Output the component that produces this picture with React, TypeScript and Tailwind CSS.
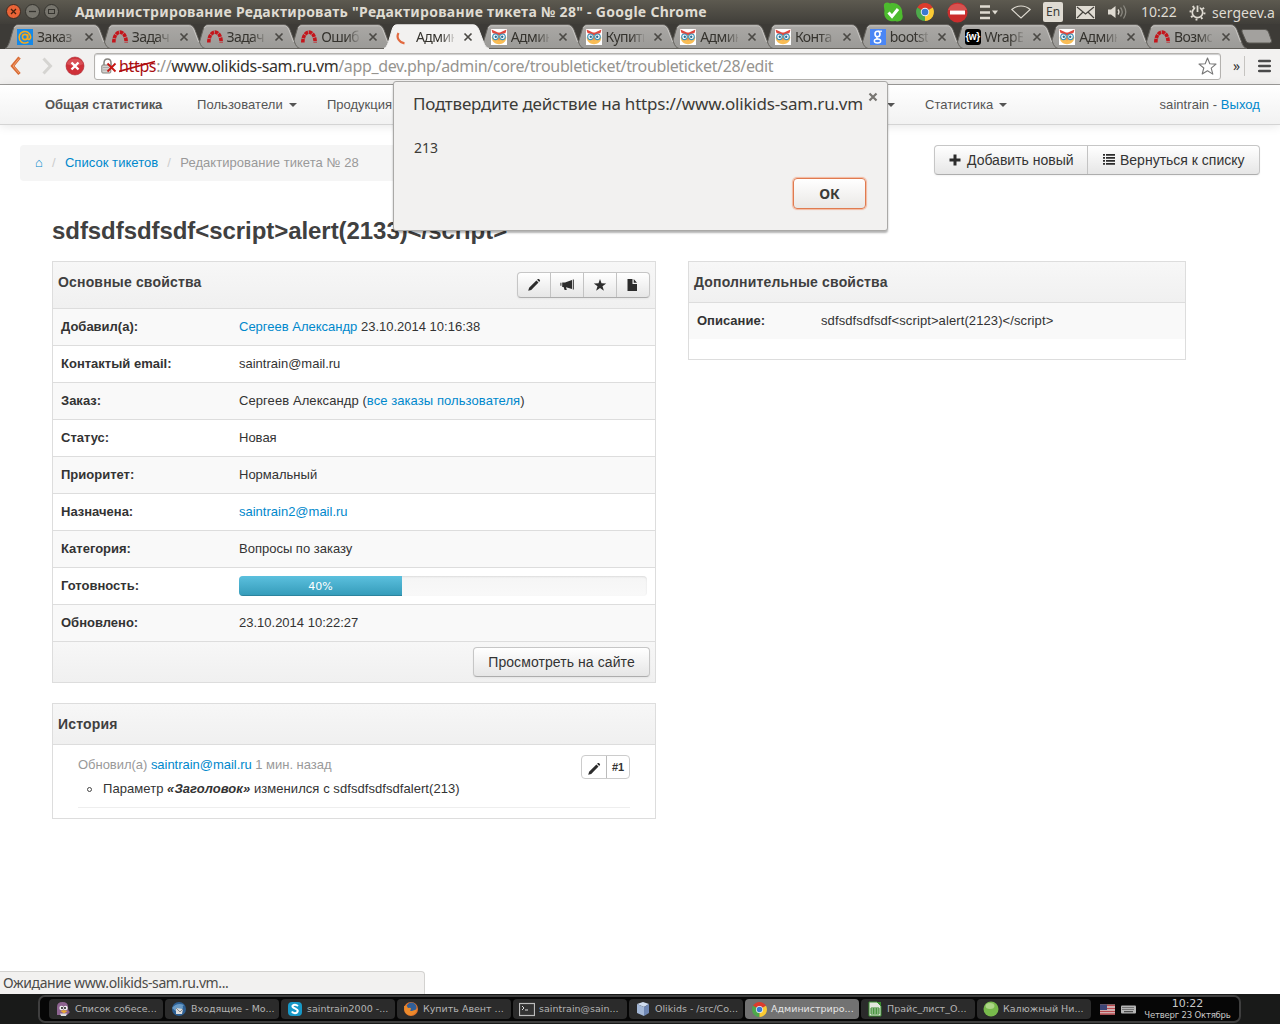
import React from 'react';

type Kids = { children?: React.ReactNode };

/* ---------- Tab icons ---------- */

const MailAt = () => (
  <svg width="16" height="16" viewBox="0 0 16 16">
    <rect width="16" height="16" fill="#1589e8" />
    <g fill="none" stroke="#f6a81c" strokeWidth="1.6">
      <circle cx="8" cy="8" r="2.6" />
      <path d="M10.7 5.2v4c0 2 3 1.600 3-1.200A5.800 5.800 0 1 0 11.500 12.800" />
    </g>
  </svg>
);

const Redmine = () => (
  <svg width="16" height="16" viewBox="0 0 16 16">
    <path d="M1.800 13.500C2 -0.300 14 -0.300 14.200 13.500" fill="none" stroke="#c4161c" strokeWidth="3.600" strokeDasharray="3.600 0.700" />
  </svg>
);

const Owl = () => (
  <svg width="16" height="16" viewBox="0 0 16 16">
    <rect width="16" height="16" fill="#fff" />
    <path d="M.8 8c-.5 9.500 14.900 9.500 14.400 0L8 6z" fill="#f9bd55" />
    <path d="M.5.5 7 3.500h2L15.500.5 14.500 4 8 6.200 1.500 4z" fill="#e2483d" />
    <circle cx="4.500" cy="7.800" r="2.800" fill="#fff" stroke="#3c91b8" strokeWidth="1.100" />
    <circle cx="11.500" cy="7.800" r="2.800" fill="#fff" stroke="#3c91b8" strokeWidth="1.100" />
    <circle cx="4.800" cy="7.800" r="1.200" fill="#2b6c93" />
    <circle cx="11.200" cy="7.800" r="1.200" fill="#2b6c93" />
    <path d="M7.200 9.500h1.600L8 12z" fill="#e2683d" />
  </svg>
);

const GoogleIcon = () => (
  <svg width="16" height="16" viewBox="0 0 16 16">
    <rect width="16" height="16" fill="#4a86f5" />
    <g fill="none" stroke="#fff">
      <ellipse cx="7.500" cy="5" rx="2.500" ry="2.800" strokeWidth="1.600" />
      <path d="M8 2.200h4" strokeWidth="1.200" />
      <path d="M7.500 8Q5.500 9 8 10" strokeWidth="1.300" />
      <ellipse cx="7.500" cy="12" rx="3.200" ry="2" strokeWidth="1.400" />
    </g>
  </svg>
);

const WrapIcon = () => (
  <span className="flex h-4 w-4 items-center justify-center rounded-[3px] bg-black font-['Liberation_Sans',sans-serif] text-[10px] leading-none font-bold tracking-[-0.5px] text-white">
    {'{w}'}
  </span>
);

const Spinner = () => (
  <svg width="16" height="16" viewBox="0 0 16 16">
    <path d="M2.500 4C0 8.500 3 13.500 8.500 14.300" fill="none" stroke="#e2693f" strokeWidth="2.200" />
  </svg>
);

const tabs = [
  { icon: <MailAt />, text: 'Заказ' },
  { icon: <Redmine />, text: 'Задач' },
  { icon: <Redmine />, text: 'Задач' },
  { icon: <Redmine />, text: 'Ошиб' },
  { icon: <Spinner />, text: 'Админ', active: true },
  { icon: <Owl />, text: 'Админ' },
  { icon: <Owl />, text: 'Купить' },
  { icon: <Owl />, text: 'Админ' },
  { icon: <Owl />, text: 'Конта' },
  { icon: <GoogleIcon />, text: 'bootst' },
  { icon: <WrapIcon />, text: 'WrapB' },
  { icon: <Owl />, text: 'Админ' },
  { icon: <Redmine />, text: 'Возмо' },
];

function Tab({ icon, text, active, z }: { icon: React.ReactNode; text: string; active?: boolean; z: number }) {
  return (
    <div className="relative h-[25px] w-[94.75px] shrink-0" style={{ zIndex: active ? 30 : z }}>
      <svg className="absolute top-0 left-0" width="106" height="25" viewBox="0 0 106 25">
        <defs>
          <linearGradient id="tabfill" x1="0" x2="0" y1="0" y2="1">
            <stop offset="0" stopColor="#aaa8a5" />
            <stop offset="1" stopColor="#9b9a97" />
          </linearGradient>
        </defs>
        <path
          d="M0 24.500C2 23.500 3 22 4.500 18L8 6C9 2.500 10 .8 13 .8H89C92 .8 93.500 2.500 95 6L99.500 18C101 22 102 23.500 105 24.500Z"
          fill={active ? '#f2f1f0' : 'url(#tabfill)'}
          stroke={active ? '#f2f1f0' : '#65635e'}
          strokeWidth="1"
        />
        {!active && <path d="M9.500 4C10.500 2 11 1.800 13 1.800H89C91 1.800 92.500 2.500 94 6L98.500 18" fill="none" stroke="#c8c6c3" strokeWidth="1" />}
      </svg>
      <div className="relative flex h-[25px] items-center pl-3">
        <span className="flex h-4 w-4 items-center">{icon}</span>
        <span className="ml-1 w-[38px] [mask-image:linear-gradient(to_right,#000_65%,rgba(0,0,0,0.15)_100%)] font-['Noto_Sans',sans-serif] text-[14px] leading-[20px] tracking-[-0.6px] whitespace-nowrap text-[#35332e]">
          {text}
        </span>
        <svg className="ml-[9px]" width="10" height="10" viewBox="0 0 10 10">
          <path d="m1.500 1.500 7 7m0-7-7 7" stroke="#4b4945" strokeWidth="1.700" />
        </svg>
      </div>
    </div>
  );
}

/* ---------- Window chrome ---------- */

const ChromeLogo = ({ size }: { size: number }) => (
  <svg width={size} height={size} viewBox="0 0 20 20">
    <path d="M10 10 1.400 5A10 10 0 0 1 18.600 5z" fill="#dd3b2c" />
    <path d="M10 10V20A10 10 0 0 1 1.400 5z" fill="#4da94b" />
    <path d="M10 10 18.600 5A10 10 0 0 1 10 20z" fill="#fbcb34" />
    <circle cx="10" cy="10" r="4.700" fill="#f3f3f3" />
    <circle cx="10" cy="10" r="3.700" fill="#3a79d0" />
  </svg>
);

function TitleBar() {
  return (
    <div className="flex h-6 items-center bg-linear-to-b from-[#5d5a50] to-[#403e39] pl-[6px] text-[#dfdbd2]">
      <svg width="54" height="16" viewBox="0 0 54 16">
        <circle cx="7.500" cy="7.500" r="7" fill="#ea6437" stroke="#3b2b23" />
        <path d="m5 5 5 5m0-5-5 5" stroke="#45200f" strokeWidth="1.300" />
        <circle cx="26.500" cy="7.500" r="7" fill="#77756d" stroke="#34332e" />
        <path d="M23 7.500h7" stroke="#35342f" strokeWidth="1.300" />
        <circle cx="45.500" cy="7.500" r="7" fill="#77756d" stroke="#34332e" />
        <rect x="42.500" y="5.500" width="6" height="4" fill="none" stroke="#35342f" />
      </svg>
      <span className="ml-[15px] w-[700px] font-['Noto_Sans',sans-serif] text-[14px] leading-6 font-bold tracking-[0.285px] whitespace-nowrap">
        Администрирование Редактировать "Редактирование тикета № 28" - Google Chrome
      </span>
      <div className="flex flex-1 items-center pl-[108px] font-['Noto_Sans',sans-serif] text-[14px]">
        <svg width="21" height="21" viewBox="0 0 21 21">
          <path d="M1 5C0 1 4-.5 7 1.500 14-.5 20 5 19.200 12c2 5-2 9-7 7C5 20.500 0 15 1.500 9z" fill="#4dbb2e" />
          <path d="m5.500 10.500 3.500 4 6-7.500" fill="none" stroke="#fff" strokeWidth="3" />
        </svg>
        <span className="ml-3"><ChromeLogo size={18} /></span>
        <svg className="ml-[13px]" width="21" height="21" viewBox="0 0 21 21">
          <circle cx="10.500" cy="10.500" r="10" fill="#cb2d2d" />
          <path d="M1 8A10 9 0 0 1 20 8Z" fill="#e06a68" opacity=".6" />
          <rect x="3" y="8.500" width="15" height="4" fill="#fff" />
        </svg>
        <svg className="ml-[12px]" width="20" height="15" viewBox="0 0 20 15">
          <path d="M0 1.500h10M0 7.500h10M0 13h10" stroke="#dfdbd2" strokeWidth="2.600" />
          <path d="M12 5.500h6l-3 4z" fill="#dfdbd2" />
        </svg>
        <svg className="ml-[11px]" width="20" height="14" viewBox="0 0 20 14">
          <path d="M.8 4.500C6-.2 14-.2 19.200 4.500L10 13z" fill="none" stroke="#dfdbd2" strokeWidth="1.100" />
        </svg>
        <span className="ml-3 flex h-5 w-5 items-center justify-center rounded-[2px] bg-[#dfdbd2] text-[12px] text-[#3c3b37]">En</span>
        <svg className="ml-[13px]" width="19" height="13" viewBox="0 0 19 13">
          <rect width="19" height="13" fill="#dfdbd2" />
          <path d="m1 1 8.500 7L18 1M1 12l6-6m11 6-6-6" fill="none" stroke="#45433d" strokeWidth="1.200" />
        </svg>
        <svg className="ml-3" width="21" height="16" viewBox="0 0 21 16">
          <path d="M1 5.500h3L8.500 2v12L4 10.500H1z" fill="#dfdbd2" />
          <path d="M11 5.500q2 2.500 0 5" fill="none" stroke="#dfdbd2" strokeWidth="1.300" />
          <path d="M13.500 3.500q3.500 4.500 0 9M16.500 1.500q4.500 6.500 0 13" fill="none" stroke="#8b8981" strokeWidth="1.300" />
        </svg>
        <span className="ml-[13px] w-9 leading-5 whitespace-nowrap">10:22</span>
        <svg className="ml-3" width="17" height="17" viewBox="0 0 17 17">
          <circle cx="8.500" cy="8.500" r="7" fill="none" stroke="#dfdbd2" strokeWidth="2" strokeDasharray="1.900 3.598" />
          <circle cx="8.500" cy="8.500" r="5.200" fill="none" stroke="#dfdbd2" strokeWidth="1.700" />
          <path d="M8.500 0v8" stroke="#4b4942" strokeWidth="4.400" />
          <path d="M8.500 1.500v6.500" stroke="#dfdbd2" strokeWidth="1.800" />
        </svg>
        <span className="ml-[6px] tracking-[0.05px]">sergeev.a</span>
      </div>
    </div>
  );
}

function TabStrip() {
  return (
    <div className="relative z-0 flex h-[25px] bg-[#3d3b37] pl-[5px]">
      {tabs.map((t, i) => (
        <Tab key={i} {...t} z={20 - i} />
      ))}
      <svg className="mt-[5px] ml-[4px] shrink-0" width="32" height="15" viewBox="0 0 32 15">
        <path d="M2 .5h22q2.500 0 3.500 2.500l3 8.500q.5 2.500-2 2.500H8q-2.500 0-3.300-2.500L1 3Q.3.500 2 .5z" fill="#a3a19e" stroke="#5a5853" />
      </svg>
    </div>
  );
}

function Toolbar() {
  return (
    <div className="flex h-9 items-center border-b border-[#9d9c9a] bg-[#f2f1f0] pb-px pl-[10px]">
      <svg width="80" height="20" viewBox="0 0 80 20">
        <path d="m9.500 1.500-7 8.500 7 8" fill="none" stroke="#d86b35" strokeWidth="3.200" />
        <path d="m9 2.500-6 7.500 6 7" fill="none" stroke="#f3a06d" strokeWidth="1" />
        <path d="m33.500 2.500 7 7.500-7 7.500" fill="none" stroke="#d5d4d1" strokeWidth="3" />
        <circle cx="65" cy="10" r="9" fill="#cf3038" stroke="#a92830" strokeWidth=".6" />
        <path d="M56.500 8a9 8 0 0 1 17 0Q65 12 56.500 8z" fill="#e0666b" opacity=".6" />
        <path d="m61.500 6.500 7 7m0-7-7 7" stroke="#fff" strokeWidth="2.400" />
      </svg>
      <div className="ml-1 flex h-[27px] w-[1127px] items-center rounded-[3px] border border-[#b4b2af] bg-white pl-[6px] shadow-[inset_0_1px_1px_#ccc]">
        <svg width="16" height="17" viewBox="0 0 16 17">
          <path d="M3 8V5q0-4 3.500-4T10 5v3" fill="none" stroke="#85837f" strokeWidth="1.500" />
          <rect x=".8" y="7" width="9" height="8" rx="1" fill="#d4d3d0" stroke="#85837f" />
          <path d="M2 9.500h6M2 12h6" stroke="#aaa" />
          <path d="m6.500 5.500 8 8m0-8-8 8" stroke="#c61612" strokeWidth="1.800" />
        </svg>
        <span className="relative ml-[2px] w-[1080px] font-['Noto_Sans',sans-serif] text-[16px] leading-6 tracking-[-0.355px] whitespace-nowrap text-[#96948f]">
          <span className="text-[#a80d10]">https</span>://<span className="text-[#34322e]">www.olikids-sam.ru.vm</span>
          /app_dev.php/admin/core/troubleticket/troubleticket/28/edit
          <svg className="absolute top-[4px] left-0" width="38" height="16" viewBox="0 0 38 16">
            <path d="M0 13.500 36 3.500" stroke="#b00c10" strokeWidth="1.700" />
          </svg>
        </span>
        <svg className="-ml-px" width="19" height="18" viewBox="0 0 19 18">
          <path d="m9.500 1 2.300 5.700 6.200.4-4.800 4 1.600 6-5.300-3.400L4.200 17l1.600-6L1 7.100l6.200-.4z" fill="#fff" stroke="#777" strokeWidth="1.100" strokeLinejoin="round" />
        </svg>
      </div>
      <span className="-mt-px ml-[12px] font-['Noto_Sans',sans-serif] text-[14px] leading-5 text-[#333]">»</span>
      <span className="ml-[4px] h-5 w-px bg-[#c6c4c1]" />
      <svg className="ml-[13px]" width="13" height="14" viewBox="0 0 13 14">
        <path d="M1.200 2h10.600M1.200 7h10.600M1.200 12h10.600" stroke="#4a4a4a" strokeWidth="2.600" strokeLinecap="round" />
      </svg>
    </div>
  );
}

/* ---------- Page ---------- */

const Caret = () => <span className="ml-[6px] block h-0 w-0 border-x-4 border-t-4 border-x-transparent border-t-[#555]" />;

const Link = ({ children }: Kids) => <a className="text-[#0088cc]">{children}</a>;

function NavBar() {
  return (
    <nav className="flex h-10 shrink-0 items-center border-b border-[#d4d4d4] bg-linear-to-b from-white to-[#f2f2f2] px-5 text-[13px] text-[#555] shadow-[0_1px_10px_rgba(0,0,0,0.1)]">
      <span className="w-[152px] pl-[25px] font-bold tracking-[-0.06px]">Общая статистика</span>
      <span className="flex w-[130px] items-center pl-[25px] tracking-[0.08px]">Пользователи<Caret /></span>
      <span className="flex w-[593px] items-center justify-between pl-[25px]">Продукция<Caret /></span>
      <span className="ml-[30px] flex items-center">Статистика<Caret /></span>
      <span className="ml-auto tracking-[0.05px]">saintrain - <Link>Выход</Link></span>
    </nav>
  );
}

const icons: Record<string, React.ReactNode> = {
  pencil: <path d="m1.200 12.800.9-3 7.300-7.300 2.100 2.100-7.300 7.300zM10.100 1.800l.8-.7q.5-.4 1 0l1 1q.5.500 0 1l-.7.8z" />,
  bullhorn: <path d="M12.800 1.500h1v10h-1zM5 4.500l7-2.500v9L6 9.200 6.800 12H4.600L3.600 9 2.200 9V4.500zM.4 4.800h1v3h-1z" />,
  star: <path d="m7 1 1.500 4.300 4.700.1-3.700 2.800 1.400 4.500L7 10l-3.900 2.700 1.400-4.500L.8 5.400l4.700-.1z" />,
  file: <path d="M1.500 1H6.500v5h4.500v7H1.500zM7.700 1 11 4.700H7.700z" />,
  plus: <path d="M4.500 1.500h3v4H11.500v3h-4v4h-3v-4h-4v-3h4z" />,
  list: <path d="M1 1h2v1.700H1zM4 1h9v1.700H4zM1 4h2v1.700H1zM4 4h9v1.700H4zM1 7h2v1.700H1zM4 7h9v1.700H4zM1 10h2V11.700H1zM4 10h9V11.700H4z" />,
};

const Glyph = ({ name }: { name: string }) => (
  <svg className="shrink-0" width="14" height="14" viewBox="0 0 14 14" fill="#2c2c2c">{icons[name]}</svg>
);

const ButtonGroup = ({ children }: Kids) => (
  <div className="flex divide-x divide-[#c3c3c3] rounded-[4px] border border-[#c6c6c6] border-b-[#adadad] bg-linear-to-b from-white to-[#e6e6e6] text-[14px] text-[#333] shadow-[0_1px_2px_rgba(0,0,0,0.05)]">
    {children}
  </div>
);

const Panel = ({ title, tall, actions, children }: Kids & { title: string; tall?: boolean; actions?: React.ReactNode }) => (
  <section className="border border-[#ddd] text-[13px] leading-5 text-[#333]">
    <header className={`flex items-center justify-between border-b border-[#ddd] bg-linear-to-b from-[#f7f7f7] to-[#f0f0f0] px-[5px] ${tall ? 'h-[47px]' : 'h-[41px]'}`}>
      <h4 className={`text-[14px] font-bold tracking-[0.17px] text-[#3f3f3f] ${tall ? 'pb-[6px]' : ''}`}>{title}</h4>
      {actions}
    </header>
    {children}
  </section>
);

const Progress = () => (
  <div className="h-5 w-[408px] overflow-hidden rounded-[4px] bg-linear-to-b from-[#f5f5f5] to-[#f9f9f9] shadow-[inset_0_1px_2px_rgba(0,0,0,0.1)]">
    <div className="h-5 w-[40%] bg-linear-to-b from-[#5bc0de] to-[#339bb9] text-center font-['DejaVu_Sans',sans-serif] text-[11px] leading-[21px] text-white shadow-[inset_0_-1px_0_rgba(0,0,0,0.15)]">
      40%
    </div>
  </div>
);

const rows: [string, React.ReactNode][] = [
  ['Добавил(а):', <><Link>Сергеев Александр</Link> 23.10.2014 10:16:38</>],
  ['Контактый email:', 'saintrain@mail.ru'],
  ['Заказ:', <span className="tracking-[0.08px]">Сергеев Александр (<Link>все заказы пользователя</Link>)</span>],
  ['Статус:', 'Новая'],
  ['Приоритет:', 'Нормальный'],
  ['Назначена:', <Link>saintrain2@mail.ru</Link>],
  ['Категория:', 'Вопросы по заказу'],
  ['Готовность:', <Progress />],
  ['Обновлено:', '23.10.2014 10:22:27'],
];

function MainColumn() {
  return (
    <div className="flex w-[604px] flex-col gap-5">
      <Panel
        title="Основные свойства"
        tall
        actions={
          <ButtonGroup>
            {['pencil', 'bullhorn', 'star', 'file'].map((n) => (
              <span key={n} className="flex h-6 w-[33px] items-center justify-center last:w-8"><Glyph name={n} /></span>
            ))}
          </ButtonGroup>
        }
      >
        {rows.map(([label, value]) => (
          <div key={label} className="flex h-[37px] items-center border-b border-[#ddd] px-2 odd:bg-white even:bg-[#f9f9f9]">
            <span className="w-[178px] font-bold">{label}</span>
            <span>{value}</span>
          </div>
        ))}
        <footer className="flex h-10 items-center justify-end bg-linear-to-b from-[#f7f7f7] to-[#f0f0f0] pr-[5px]">
          <ButtonGroup><span className="flex h-7 w-[175px] items-center justify-center tracking-[0.08px]">Просмотреть на сайте</span></ButtonGroup>
        </footer>
      </Panel>
      <Panel title="История">
        <div className="h-[73px] px-[25px] pt-[10px]">
          <div className="flex h-[53px] justify-between border-b border-[#eee]">
            <div>
              <p className="tracking-[-0.03px] text-[#999]">Обновил(а) <Link>saintrain@mail.ru</Link> 1 мин. назад</p>
              <p className="mt-1 flex items-center pl-[10px]">
                <span className="mr-[8px] ml-[-1px] h-[5px] w-[5px] rounded-full border border-[#444]" />
                <span className="pl-[3px] tracking-[0.06px]">Параметр <b><i>«Заголовок»</i></b> изменился с sdfsdfsdfsdfalert(213)</span>
              </p>
            </div>
            <div className="flex h-6 divide-x divide-[#bbb] rounded-[4px] border border-[#ccc] bg-white text-[11px] font-bold text-[#333]">
              <span className="flex w-[25px] items-center justify-center pt-1"><Glyph name="pencil" /></span>
              <span className="flex w-[22px] items-center justify-center">#1</span>
            </div>
          </div>
        </div>
      </Panel>
    </div>
  );
}

function Page() {
  return (
    <main className="flex h-[909px] flex-col bg-white font-['Liberation_Sans',sans-serif]">
      <NavBar />
      <div className="mx-5 mt-5 flex items-start justify-between">
        <div className="flex h-9 w-[860px] items-center rounded-[4px] bg-[#f5f5f5] pl-[15px] text-[13px] tracking-[0.05px] text-[#999]">
          <Link>⌂</Link>
          <span className="ml-[9px] w-[13px] text-[#ccc]">/</span>
          <Link>Список тикетов</Link>
          <span className="ml-[9px] w-[13px] text-[#ccc]">/</span>
          <span>Редактирование тикета № 28</span>
        </div>
        <ButtonGroup>
          <span className="flex h-7 w-[153px] items-center gap-1 pl-[14px] whitespace-nowrap"><Glyph name="plus" />Добавить новый</span>
          <span className="flex h-7 w-[171px] items-center gap-1 pl-[14px] whitespace-nowrap"><Glyph name="list" />Вернуться к списку</span>
        </ButtonGroup>
      </div>
      <h3 className="mt-[30px] ml-[52px] h-[50px] text-[24px] leading-10 font-bold tracking-[-0.06px] text-[#404040]">{'sdfsdfsdfsdf<script>alert(2133)</script>'}</h3>
      <div className="ml-[52px] flex items-start gap-8">
        <MainColumn />
        <div className="w-[498px]">
          <Panel title="Дополнительные свойства">
            <div className="mb-5 flex h-9 items-center bg-[#f9f9f9] px-2">
              <span className="w-[124px] font-bold">Описание:</span>
              <span className="tracking-[0.1px]">{'sdfsdfsdfsdf<script>alert(2123)</script>'}</span>
            </div>
          </Panel>
        </div>
      </div>
    </main>
  );
}

function AlertDialog() {
  return (
    <div className="absolute top-[81px] left-[393px] z-40 h-[150px] w-[495px] rounded-[3px] border border-[#aaa9a7] bg-[#f2f1f0] font-['Noto_Sans',sans-serif] text-[#3c3b37] shadow-[0_2px_2px_rgba(0,0,0,0.3)]">
      <div className="flex justify-between pt-[10px] pr-[9px] pl-[19px]">
        <span className="text-[17px] leading-6 tracking-[-0.2px] whitespace-nowrap">Подтвердите действие на https://www.olikids-sam.ru.vm</span>
        <svg className="shrink-0" width="10" height="10" viewBox="0 0 10 10">
          <path d="m1.500 1.500 7 7m0-7-7 7" stroke="#777571" strokeWidth="2.200" />
        </svg>
      </div>
      <p className="mt-[22px] pl-5 text-[14px] leading-5">213</p>
      <div className="mt-5 flex justify-end pr-[21px]">
        <button className="h-[31px] w-[73px] rounded-[4px] border border-[#e07b50] bg-linear-to-b from-white to-[#eae8e6] text-[14px] leading-5 font-bold shadow-[0_0_1px_1px_#f3b89f]">ОК</button>
      </div>
    </div>
  );
}

/* ---------- Taskbar ---------- */

const TaskIcon = ({ children }: Kids) => <svg className="shrink-0" width="16" height="16" viewBox="0 0 16 16">{children}</svg>;

const tasks: { icon: React.ReactNode; text: string; active?: boolean }[] = [
  {
    text: 'Список собесе...',
    icon: <TaskIcon><path d="M2 14V6q0-5 5.500-5T13 6q0 4 2 5l-3 3z" fill="#8d6390" /><circle cx="6.500" cy="7" r="2.200" fill="#eee" /><circle cx="10.500" cy="7" r="2.200" fill="#eee" /><circle cx="7" cy="7" r=".9" /><circle cx="10" cy="7" r=".9" /><path d="m5.500 10 3-1 4 1-3.500 2.500z" fill="#e6a735" /><path d="M5 12.500h7l-1 2.500H6z" fill="#ddd" /></TaskIcon>,
  },
  {
    text: 'Входящие - Mo...',
    icon: <TaskIcon><circle cx="8" cy="8" r="7" fill="#2d5f93" /><path d="M1 7q5-6 12-3-2 1-1 3l-5 5z" fill="#699ac5" /><path d="m5 7 7 1-1 5-6 0z" fill="#ddd" /><path d="m5 7 4 4 3-3" fill="none" stroke="#888" /></TaskIcon>,
  },
  {
    text: 'saintrain2000 -...',
    icon: <TaskIcon><rect x="1" y="1" width="14" height="14" rx="4" fill="#1798c7" /><path d="M11 5Q8 2.500 5.500 4.800C4.500 7 11 7.500 10.800 10 10 13 6 12.500 4.800 10.500" fill="none" stroke="#fff" strokeWidth="2" /></TaskIcon>,
  },
  {
    text: 'Купить Авент ...',
    icon: <TaskIcon><circle cx="8" cy="8" r="7" fill="#e5762b" /><circle cx="8.500" cy="6.500" r="5" fill="#315f99" /><path d="M1 5q3-1 4 2 3-1 3 1-3 4 6 0-2 7-8 6Q1 13 1 5z" fill="#ec8a2c" /></TaskIcon>,
  },
  {
    text: 'saintrain@sain...',
    icon: <TaskIcon><rect x=".5" y="2.500" width="15" height="12" fill="#333" stroke="#bbb" strokeWidth="1.200" /><path d="m3 5 2 2-2 2m3 0h3" fill="none" stroke="#ddd" /></TaskIcon>,
  },
  {
    text: 'Olikids - /src/Co...',
    icon: <TaskIcon><path d="m2 3 6-2 6 2-5 3z" fill="#cfdcee" /><path d="m2 3 7 3v9l-7-3z" fill="#a3b7d6" /><path d="m9 6 5-3v9l-5 3z" fill="#6e86b3" /></TaskIcon>,
  },
  { text: 'Администриро...', icon: <ChromeLogo size={15} />, active: true },
  {
    text: 'Прайс_лист_О...',
    icon: <TaskIcon><path d="M2 1h8l4 4v10H2z" fill="#e2e7dd" stroke="#398c2f" /><path d="M10 1h4v4z" fill="#398c2f" /><path d="M4 7h8v6H4zm0 2h8m-8 2h8M6.700 7v6m2.600-6v6" fill="none" stroke="#398c2f" /></TaskIcon>,
  },
  { text: 'Калюжный Ни...', icon: <TaskIcon><circle cx="8" cy="8" r="7.500" fill="#78b94c" /><ellipse cx="7" cy="5" rx="4.500" ry="3" fill="#add587" /></TaskIcon> },
];

function Taskbar() {
  return (
    <div className="flex h-[30px] bg-[#191a19] font-['DejaVu_Sans',sans-serif]">
      <div className="mt-px ml-[38px] flex h-[28px] w-[1203px] items-center rounded-[7px] border-2 border-[#3e3e3e] bg-[#060606] pl-[9px]">
        <div className="flex gap-[2px]">
          {tasks.map((t) => (
            <div
              key={t.text}
              className={`flex h-5 w-[114px] items-center gap-[4px] rounded-[4px] pl-[6px] text-[9.5px] whitespace-nowrap ${t.active ? 'bg-[#727272] text-[#e6e6e6]' : 'bg-[#2b2b2b] text-[#b4b4b4]'}`}
            >
              <span className="flex w-4 justify-center">{t.icon}</span>
              {t.text}
            </div>
          ))}
        </div>
        <svg className="ml-[9px]" width="37" height="11" viewBox="0 0 37 11">
          <rect y=".5" width="15" height="10" fill="#d8d0d0" />
          <path d="M0 1.500h15M0 4.500h15M0 7.500h15M0 10h15" stroke="#b8484d" strokeWidth="1.300" />
          <rect y=".5" width="7" height="5.500" fill="#3d4576" />
          <rect x="21" y="1.500" width="15" height="8" rx="1" fill="#b5b5b5" />
          <path d="M22.500 3.500h12M22.500 5.500h12" stroke="#333" strokeDasharray="1 1" />
          <path d="M24 7.700h9" stroke="#333" />
        </svg>
        <div className="ml-[7px] flex w-[87px] flex-col items-center whitespace-nowrap text-[#c8c8c8]">
          <span className="text-[11px] leading-[12px]">10:22</span>
          <span className="text-[8.500px] leading-[11px] tracking-[-0.2px]">Четверг 23 Октябрь</span>
        </div>
      </div>
    </div>
  );
}

export default function App() {
  return (
    <div className="relative h-[1024px] w-[1280px] overflow-hidden">
      <TitleBar />
      <TabStrip />
      <Toolbar />
      <Page />
      <AlertDialog />
      <div className="absolute top-[971px] left-0 h-[23px] w-[425px] rounded-tr-[4px] border-t border-r border-[#d3d2d0] bg-[#f2f1f0] pl-[3px] font-['Noto_Sans',sans-serif] text-[14px] leading-[22px] tracking-[-0.4px] text-[#4c4b48]">
        Ожидание www.olikids-sam.ru.vm...
      </div>
      <Taskbar />
    </div>
  );
}
